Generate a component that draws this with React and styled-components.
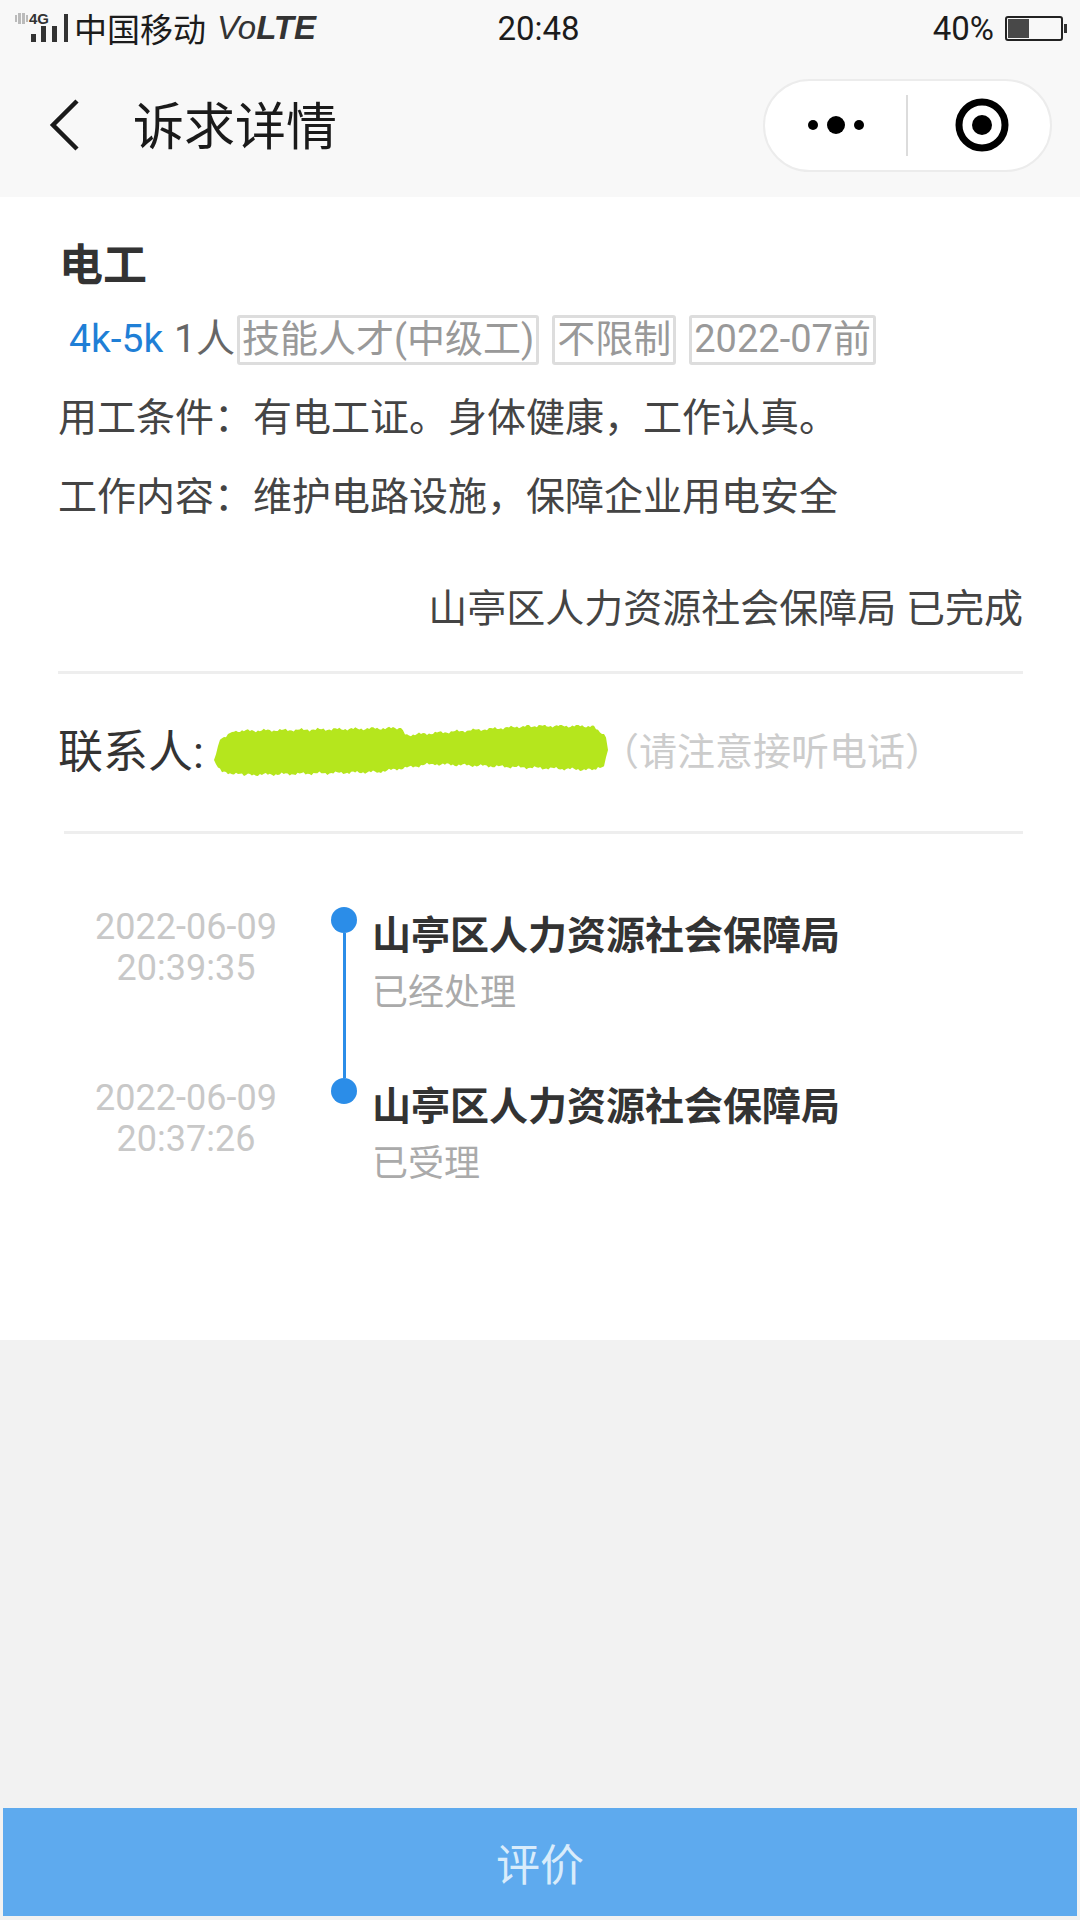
import React from "react";
import styled, { createGlobalStyle } from "styled-components";

const GlobalStyle = createGlobalStyle`
  html, body {
    margin: 0;
    padding: 0;
    background: #f2f2f2;
    font-family: Roboto, "Noto Sans CJK SC", sans-serif;
  }
  * { box-sizing: border-box; }
`;

// full width punctuation, written as escapes so it can't get swapped for ascii
const COLON = "\uFF1A";
const COMMA = "\uFF0C";
const L_PAREN = "\uFF08";
const R_PAREN = "\uFF09";

// outline of the scribble over the phone number, x / y read from the screenshot
const blobTop = [[0, 35], [6, 14], [20, 6], [187, 3], [193, 10], [315, 1], [380, 1], [392, 12], [394, 25]];
const blobBottom = [[394, 25], [390, 42], [380, 45], [217, 39], [163, 47], [30, 50], [8, 47], [0, 38]];

const furEdge = (line, side) => {
  const pts = [];
  line.slice(0, -1).forEach(([x1, y1], i) => {
    const [x2, y2] = line[i + 1];
    const steps = Math.max(1, Math.round(Math.abs(x2 - x1) / 2));
    for (let s = 0; s < steps; s++) {
      const t = s / steps;
      const fur = (Math.sin(s * 2.3 + i) + Math.sin(s * 0.7)) * 0.9;
      pts.push(`${(x1 + (x2 - x1) * t).toFixed(1)},${(y1 + (y2 - y1) * t + side * fur).toFixed(1)}`);
    }
  });
  return pts.join(" ");
};
const blobPoints = `${furEdge(blobTop, 1)} ${furEdge(blobBottom, -1)}`;

const Page = styled.div`
  width: 1080px;
  height: 1920px;
  display: flex;
  flex-direction: column;
  background: #f2f2f2;
  overflow: hidden;
`;
const Header = styled.header`
  height: 197px;
  flex: none;
  background: #f8f8f8;
  display: flex;
  flex-direction: column;
`;
const StatusBar = styled.div`
  height: 55px;
  display: grid;
  grid-template-columns: 1fr auto 1fr;
  align-items: center;
  padding: 1px 17px 0 14px;
  color: #1c1c1c;
  font-size: 33px;
`;
const StatusLeft = styled.div`
  display: flex;
  align-items: center;
`;
const Carrier = styled.span`
  margin-left: -1px;
  white-space: nowrap;
`;
const VoLte = styled.span`
  margin-left: 11px;
  font-size: 33px;
  font-style: italic;
  font-weight: 700;
  color: #333;
  font-family: "Liberation Sans", sans-serif;
  small {
    font-size: 33px;
    font-weight: 400;
  }
`;
const StatusRight = styled.div`
  display: flex;
  justify-content: flex-end;
  align-items: center;
  gap: 11px;
  font-size: 33px;
`;
const Battery = styled.div`
  width: 58px;
  height: 25px;
  border: 2px solid #222;
  border-radius: 3px;
  padding: 1px;
  position: relative;
  &::after {
    content: "";
    position: absolute;
    right: -6px;
    top: 6px;
    width: 3px;
    height: 9px;
    background: #333;
  }
`;
const BatteryFill = styled.div`
  width: 21px;
  height: 100%;
  background: #484848;
`;
const NavBar = styled.div`
  flex: 1;
  display: flex;
  align-items: center;
  padding: 0 28px 2px 49px;
`;
const BackButton = styled.svg`
  width: 32px;
  height: 54px;
  flex: none;
`;
const NavTitle = styled.h1`
  margin: 4px 0 0 52px;
  flex: 1;
  font-size: 51px;
  font-weight: 400;
  color: #1a1a1a;
  line-height: 1;
`;
const Capsule = styled.div`
  width: 289px;
  height: 93px;
  display: flex;
  align-items: center;
  background: #fff;
  border: 2px solid #ececec;
  border-radius: 47px;
`;
const CapsulePart = styled.div`
  flex: 0 0 141px;
  display: flex;
  align-items: center;
  justify-content: center;
  padding-left: ${(p) => p.$shift || 0}px;
`;
const CapsuleLine = styled.div`
  width: 2px;
  height: 61px;
  background: #dcdcdc;
`;
const Content = styled.main`
  height: 1143px;
  flex: none;
  background: #fff;
  padding: 45px 57px 0 58px;
`;
const JobTitle = styled.h2`
  margin: 0 0 0 1px;
  font-size: 44px;
  line-height: 48px;
  font-weight: 700;
  color: #333;
`;
const TagRow = styled.div`
  display: flex;
  align-items: center;
  height: 50px;
  margin-top: 25px;
  padding-left: 11px;
  font-size: 38px;
  line-height: 1;
  white-space: nowrap;
`;
const Salary = styled.span`
  color: #1f7fd6;
  width: 105px;
  font-size: 39px;
  padding-bottom: 2px;
`;
const Headcount = styled.span`
  color: #666;
  width: 63px;
  font-size: 39px;
  padding-bottom: 2px;
`;
const Tag = styled.span`
  height: 50px;
  display: flex;
  align-items: center;
  padding: 0 2px 3px;
  margin-right: 13px;
  border: 3px solid #ddd;
  border-radius: 3px;
  color: #999;
`;
const InfoLine = styled.p`
  margin: ${(p) => p.$top}px 0 0;
  font-size: 39px;
  line-height: 50px;
  color: #444;
  white-space: nowrap;
`;
const Publisher = styled.p`
  margin: 62px 0 0;
  text-align: right;
  font-size: 39px;
  line-height: 50px;
  color: #444;
  white-space: nowrap;
`;
const Divider = styled.div`
  height: 3px;
  background: #eeeeee;
  margin-top: ${(p) => p.$top}px;
  margin-left: ${(p) => p.$left}px;
`;
const ContactRow = styled.div`
  display: flex;
  align-items: center;
  height: 60px;
  margin-top: 44px;
  white-space: nowrap;
`;
const ContactLabel = styled.span`
  width: 156px;
  font-size: 45px;
  color: #333;
`;
const Scribble = styled.svg`
  width: 394px;
  height: 52px;
  flex: none;
  margin-top: 6px;
`;
const ContactHint = styled.span`
  margin-left: -7px;
  font-size: 38px;
  color: #cccccc;
`;
const Timeline = styled.div`
  margin-top: 68px;
  margin-left: 37px;
`;
const TimelineItem = styled.div`
  height: 171px;
  display: flex;
`;
const TimeCol = styled.div`
  width: 182px;
  padding-top: 5px;
  text-align: center;
  font-size: 36px;
  line-height: 41px;
  color: #c8c8c8;
`;
const Rail = styled.div`
  width: 26px;
  margin-left: 54px;
  padding-top: 5px;
  display: flex;
  flex-direction: column;
  align-items: center;
`;
const RailDot = styled.div`
  width: 26px;
  height: 26px;
  flex: none;
  border-radius: 50%;
  background: #2b8de8;
`;
const RailLine = styled.div`
  flex: 1;
  width: 3px;
  margin-bottom: -5px;
  background: #2b8de8;
`;
const ItemBody = styled.div`
  margin-left: 15px;
  padding-top: 9px;
`;
const ItemTitle = styled.div`
  font-size: 39px;
  line-height: 50px;
  font-weight: 700;
  color: #333;
  white-space: nowrap;
`;
const ItemStatus = styled.div`
  margin-top: 7px;
  font-size: 36px;
  line-height: 50px;
  color: #aaaaaa;
`;
const Footer = styled.div`
  flex: 1;
  display: flex;
  flex-direction: column;
  justify-content: flex-end;
  padding: 0 3px 4px;
`;
const RateButton = styled.button`
  height: 108px;
  border: none;
  background: #5eaaee;
  color: #d9ecfb;
  font-size: 44px;
  font-family: inherit;
  padding: 0;
`;

const SignalIcon = () => (
  <svg width="61" height="42" viewBox="0 0 61 42">
    <g fill="#bbb">
      <rect x="1" y="8" width="2" height="7" />
      <rect x="4" y="6" width="3" height="11" />
      <rect x="8" y="6" width="3" height="11" />
      <rect x="12" y="8" width="2" height="7" />
    </g>
    <text x="15" y="17" fontSize="15" fontWeight="700" fill="#333" fontFamily="Liberation Sans, sans-serif">
      4G
    </text>
    <g fill="#333">
      <rect x="17" y="27" width="5" height="8" />
      <rect x="27" y="19" width="5" height="16" />
      <rect x="38" y="19" width="5" height="16" />
      <rect x="50" y="7" width="4" height="28" />
    </g>
  </svg>
);

const timeline = [
  { date: "2022-06-09", time: "20:39:35", org: "山亭区人力资源社会保障局", status: "已经处理" },
  { date: "2022-06-09", time: "20:37:26", org: "山亭区人力资源社会保障局", status: "已受理" },
];

const App = () => {
  return (
    <Page lang="zh-CN">
      <GlobalStyle />
      <Header>
        <StatusBar>
          <StatusLeft>
            <SignalIcon />
            <Carrier>中国移动</Carrier>
            <VoLte>
              <small>Vo</small>LTE
            </VoLte>
          </StatusLeft>
          <span>20:48</span>
          <StatusRight>
            <span>40%</span>
            <Battery>
              <BatteryFill />
            </Battery>
          </StatusRight>
        </StatusBar>
        <NavBar>
          <BackButton viewBox="0 0 32 54">
            <path d="M28 3 L4 27 L28 51" fill="none" stroke="#1a1a1a" strokeWidth="4.5" />
          </BackButton>
          <NavTitle>诉求详情</NavTitle>
          <Capsule>
            <CapsulePart>
              <svg width="60" height="24" viewBox="0 0 60 24">
                <circle cx="7" cy="12" r="5" fill="#000" />
                <circle cx="30" cy="12" r="9" fill="#000" />
                <circle cx="53" cy="12" r="5" fill="#000" />
              </svg>
            </CapsulePart>
            <CapsuleLine />
            <CapsulePart $shift={6}>
              <svg width="54" height="54" viewBox="0 0 54 54">
                <circle cx="27" cy="27" r="23" fill="none" stroke="#000" strokeWidth="7" />
                <circle cx="27" cy="27" r="10" fill="#000" />
              </svg>
            </CapsulePart>
          </Capsule>
        </NavBar>
      </Header>
      <Content>
        <JobTitle>电工</JobTitle>
        <TagRow>
          <Salary>4k-5k</Salary>
          <Headcount>1人</Headcount>
          <Tag>技能人才(中级工)</Tag>
          <Tag>不限制</Tag>
          <Tag>2022-07前</Tag>
        </TagRow>
        <InfoLine $top={28}>{`用工条件${COLON}有电工证。身体健康${COMMA}工作认真。`}</InfoLine>
        <InfoLine $top={29}>{`工作内容${COLON}维护电路设施${COMMA}保障企业用电安全`}</InfoLine>
        <Publisher>山亭区人力资源社会保障局 已完成</Publisher>
        <Divider $top={37} $left={0} />
        <ContactRow>
          <ContactLabel>联系人:</ContactLabel>
          <Scribble viewBox="0 0 394 52">
            <polygon points={blobPoints} fill="#b5e61d" />
          </Scribble>
          <ContactHint>{`${L_PAREN}请注意接听电话${R_PAREN}`}</ContactHint>
        </ContactRow>
        <Divider $top={53} $left={6} />
        <Timeline>
          {timeline.map((item, i) => (
            <TimelineItem key={item.time}>
              <TimeCol>
                {item.date}
                <br />
                {item.time}
              </TimeCol>
              <Rail>
                <RailDot />
                {i < timeline.length - 1 && <RailLine />}
              </Rail>
              <ItemBody>
                <ItemTitle>{item.org}</ItemTitle>
                <ItemStatus>{item.status}</ItemStatus>
              </ItemBody>
            </TimelineItem>
          ))}
        </Timeline>
      </Content>
      <Footer>
        <RateButton>评价</RateButton>
      </Footer>
    </Page>
  );
};

export default App;
